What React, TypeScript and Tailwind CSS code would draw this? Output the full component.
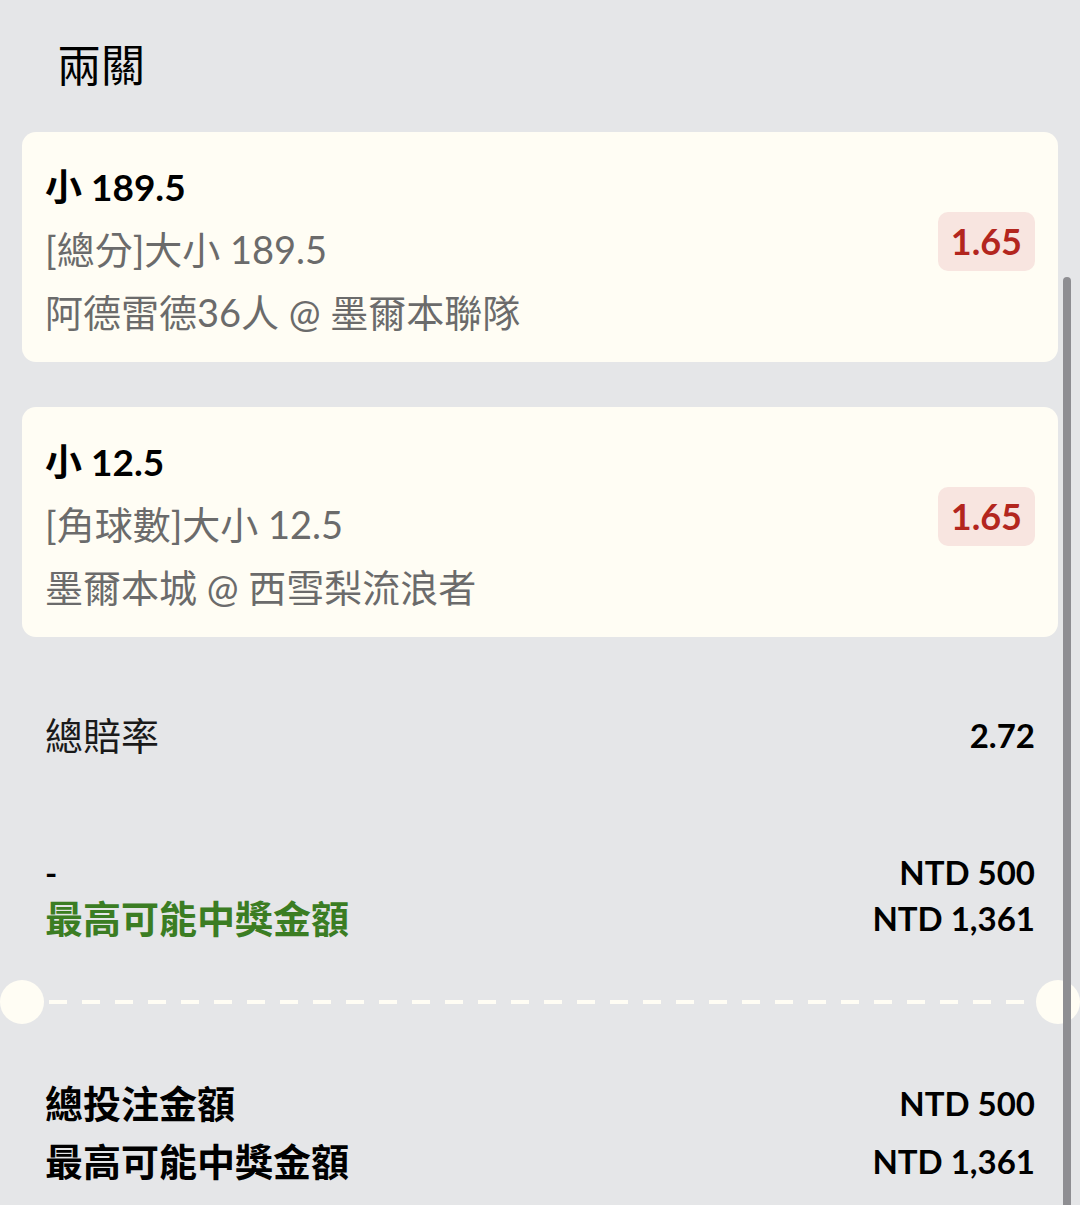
import React from 'react';

const FONT = "font-['Lato','Noto_Sans_CJK_TC',sans-serif]";

const LEGS = [
  { pick: '小 189.5', market: '[總分]大小 189.5', teams: '阿德雷德36人 @ 墨爾本聯隊', odds: '1.65' },
  { pick: '小 12.5', market: '[角球數]大小 12.5', teams: '墨爾本城 @ 西雪梨流浪者', odds: '1.65' },
];

const LegCard: React.FC<{ pick: string; market: string; teams: string; odds: string }> = ({ pick, market, teams, odds }) => (
  <div className="mx-[22px] flex items-center rounded-[14px] bg-[#fffdf4] pl-[23px] pr-[23px] pt-[23px] pb-[18px]">
    <div className="flex-1 leading-[63px]">
      <div className="text-[37px] font-bold text-black">{pick}</div>
      <div className="text-[38px] text-[#6b6b6b]">{market}</div>
      <div className="text-[38px] text-[#6b6b6b]">{teams}</div>
    </div>
    <div className="mb-[17px] rounded-[10px] bg-[#f8e5e0] px-[13px] text-[36px] font-bold leading-[59px] text-[#b3261e]">
      {odds}
    </div>
  </div>
);

const App: React.FC = () => {
  return (
    <div className={`relative min-h-[1205px] overflow-hidden bg-[#e5e6e8] ${FONT}`}>
      <div className="pl-[57px] pt-[36px] pb-[42px] font-['Noto_Sans_CJK_TC',sans-serif] text-[44px] leading-[54px] text-black">
        兩關
      </div>

      <div className="flex flex-col gap-[45px]">
        {LEGS.map((leg, i) => (
          <LegCard key={i} {...leg} />
        ))}
      </div>

      <div className="mt-[75px] flex items-center justify-between pl-[45px] pr-[45px] leading-[46px]">
        <span className="text-[38px] text-[#1a1a1a]">總賠率</span>
        <span className="text-[33px] font-bold text-black">2.72</span>
      </div>

      <div className="mt-[91px] pl-[45px] pr-[45px] leading-[46px]">
        <div className="flex items-center justify-between">
          <span className="text-[33px] font-bold text-black">-</span>
          <span className="text-[33px] font-bold text-black">NTD 500</span>
        </div>
        <div className="flex items-center justify-between">
          <span className="text-[38px] font-bold text-[#3b7d23]">最高可能中獎金額</span>
          <span className="text-[33px] font-bold text-black">NTD 1,361</span>
        </div>
      </div>

      <div className="mt-[39px] flex h-11 items-center">
        <div className="h-11 w-11 shrink-0 rounded-full bg-[#fffdf4]" />
        <div className="mx-[5px] h-1 flex-1 bg-[repeating-linear-gradient(90deg,#fffdf4_0px,#fffdf4_18px,transparent_18px,transparent_33px)]" />
        <div className="h-11 w-11 shrink-0 rounded-full bg-[#fffdf4]" />
      </div>

      <div className="mt-[50px] pl-[45px] pr-[45px] leading-[58px]">
        <div className="flex items-center justify-between">
          <span className="text-[38px] font-bold text-black">總投注金額</span>
          <span className="text-[33px] font-bold text-black">NTD 500</span>
        </div>
        <div className="flex items-center justify-between">
          <span className="text-[38px] font-bold text-black">最高可能中獎金額</span>
          <span className="text-[33px] font-bold text-black">NTD 1,361</span>
        </div>
      </div>

      {/* scroll indicator */}
      <div className="absolute top-[277px] right-[9px] h-[1000px] w-2 rounded-full bg-[#8e8e92]" />
    </div>
  );
};

export default App;
